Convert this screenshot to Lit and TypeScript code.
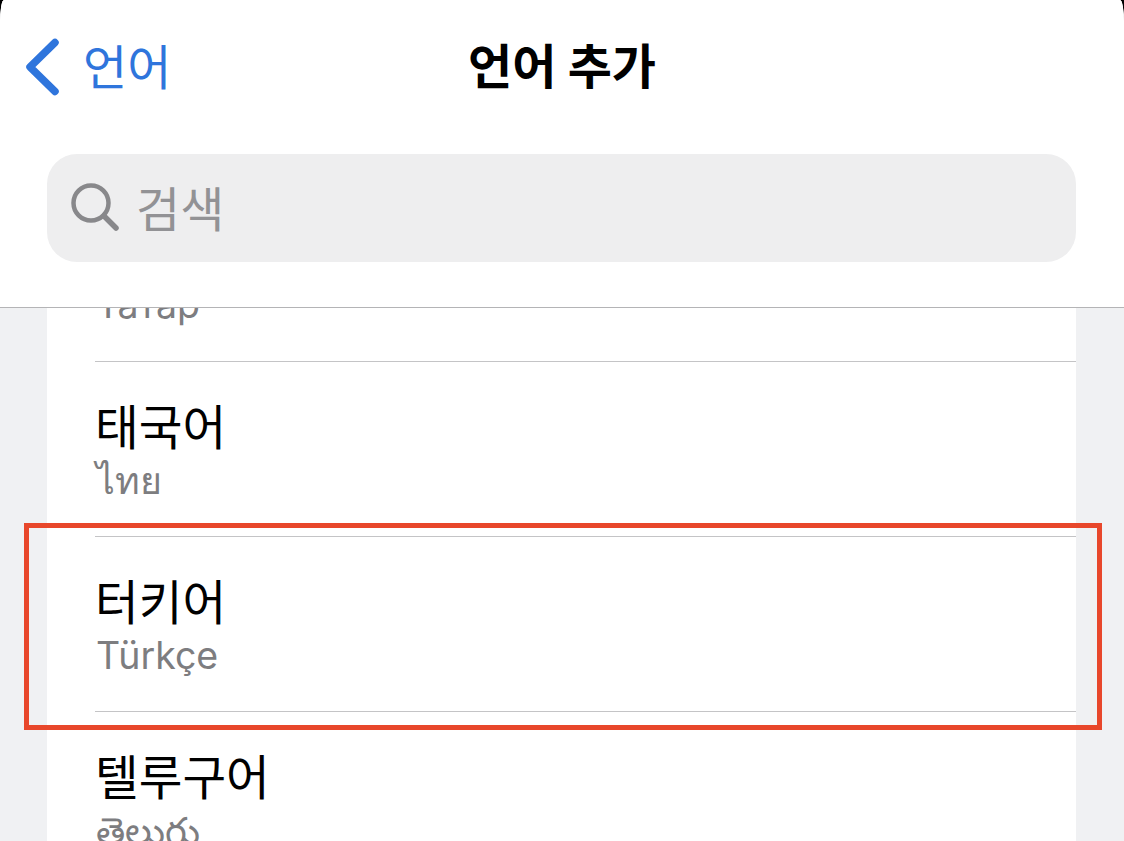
import { LitElement, html, css } from "lit";
import { customElement } from "lit/decorators.js";

const rows = [
  { title: "", sub: "Татар" },
  { title: "태국어", sub: "ไทย" },
  { title: "터키어", sub: "Türkçe" },
  { title: "텔루구어", sub: "తెలుగు" },
];

@customElement("app-root")
export class AppRoot extends LitElement {
  static styles = css`
    :host {
      display: block;
      position: relative;
      width: 1124px;
      height: 841px;
      overflow: hidden;
      background: #000;
      font-family: "Inter", "Noto Sans CJK KR", "DejaVu Sans", sans-serif;
    }
    .screen {
      height: 841px;
      display: flex;
      flex-direction: column;
      background: #f0f1f3;
      border-radius: 4px 4px 0 0 / 22px 22px 0 0;
      overflow: hidden;
    }
    header {
      flex: none;
      height: 308px;
      box-sizing: border-box;
      background: #fff;
      border-bottom: 1px solid #b4b4b6;
      display: flex;
      flex-direction: column;
      position: relative;
      z-index: 1;
    }
    .nav {
      height: 134px;
      display: grid;
      grid-template-columns: 1fr auto 1fr;
      align-items: center;
    }
    .back {
      display: flex;
      align-items: center;
      gap: 24px;
      padding-left: 25px;
      color: #2f75dc;
      font-size: 48px;
      line-height: 1;
    }
    .back svg { display: block; }
    .back span { margin-top: 1px; }
    h1 {
      margin: 0;
      font-size: 48px;
      font-weight: 700;
      line-height: 1;
      color: #000;
    }
    .search {
      margin: 20px 48px 0 47px;
      height: 108px;
      border-radius: 30px;
      background: #eeeeef;
      display: flex;
      align-items: center;
      gap: 17px;
      padding-left: 24px;
      color: #929295;
      font-size: 48px;
    }
    .search svg { display: block; }
    .search span { margin-top: -5px; }
    .list {
      flex: 1;
      margin: -122px 48px 0 47px;
      background: #fff;
      overflow: hidden;
    }
    .row {
      height: 175px;
      box-sizing: border-box;
      margin-left: 48px;
      border-top: 1px solid #c4c4c6;
      display: flex;
      flex-direction: column;
      padding-top: 40px;
    }
    .row:first-child { border-top: none; }
    .title {
      font-size: 47.5px;
      line-height: 52px;
      color: #000;
    }
    .sub {
      font-size: 37.5px;
      line-height: 44px;
      margin-top: 5px;
      color: #7d7d80;
      margin-left: 1px;
    }
    .mark {
      position: absolute;
      left: 24px;
      top: 523px;
      width: 1078px;
      height: 207px;
      box-sizing: border-box;
      border: 5px solid #e8472b;
      z-index: 2;
    }
  `;

  render() {
    return html`
      <div class="screen">
        <header>
          <div class="nav">
            <div class="back">
              <svg width="34" height="58" viewBox="0 0 34 58" fill="none">
                <path d="M30 4.5 5 29l25 24.5" stroke="#2f75dc" stroke-width="7.5" stroke-linecap="round" stroke-linejoin="round" />
              </svg>
              <span>언어</span>
            </div>
            <h1>언어 추가</h1>
            <div></div>
          </div>
          <div class="search">
            <svg width="48" height="50" viewBox="0 0 48 50" fill="none">
              <circle cx="20" cy="20" r="17.5" stroke="#88888b" stroke-width="4.5" />
              <path d="M33 33 45 45" stroke="#88888b" stroke-width="5.5" stroke-linecap="round" />
            </svg>
            <span>검색</span>
          </div>
        </header>
        <div class="list">
          ${rows.map(
            (r) => html`
              <div class="row">
                <div class="title">${r.title || "\u00a0"}</div>
                <div class="sub">${r.sub}</div>
              </div>
            `
          )}
        </div>
      </div>
      <div class="mark"></div>
    `;
  }
}
